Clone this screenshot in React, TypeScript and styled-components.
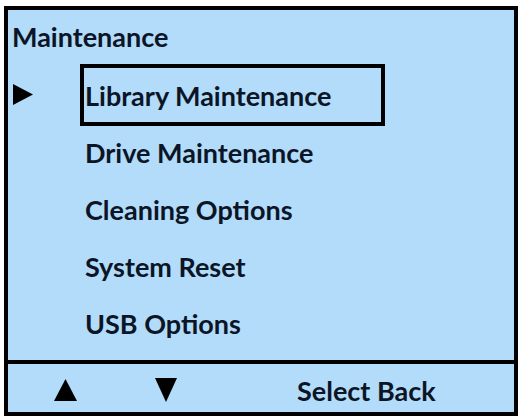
import styled, { createGlobalStyle } from 'styled-components';

const Global = createGlobalStyle`
  html, body {
    margin: 0;
    padding: 0;
    background: #ffffff;
  }
  body {
    font-family: Lato, "Open Sans", "Liberation Sans", sans-serif;
    color: #0b1526;
  }
`

const Frame = styled.div`
  box-sizing: border-box;
  margin: 6px 2px 0 4px;
  width: 514px;
  height: 410px;
  border: 4px solid #000;
  background: #b3dcfb;
  display: flex;
  flex-direction: column;
`

const Title = styled.div`
  font-size: 27px;
  font-weight: 700;
  padding: 13px 0 0 4px;
  height: 43px;
  line-height: 28px;
`

const Menu = styled.ul`
  list-style: none;
  margin: 0;
  padding: 0;
  flex: 1;
  display: flex;
  flex-direction: column;
`

const Row = styled.li`
  display: flex;
  align-items: center;
  height: 57px;
`

const Pointer = styled.span<{ $show: boolean }>`
  width: 72px;
  padding-left: 5px;
  box-sizing: border-box;
  visibility: ${p => (p.$show ? 'visible' : 'hidden')};
  svg {
    display: block;
  }
`

const Item = styled.span<{ $active: boolean }>`
  box-sizing: border-box;
  width: 305px;
  height: 62px;
  display: flex;
  align-items: center;
  padding: 2px 0 0 1px;
  border: 4px solid ${p => (p.$active ? '#000' : 'transparent')};
  font-size: 27px;
  font-weight: 700;
`

const Footer = styled.div`
  border-top: 4px solid #000;
  height: 48px;
  display: flex;
  align-items: center;
  font-size: 27px;
  font-weight: 700;
`

const Key = styled.span<{ $w: number }>`
  width: ${p => p.$w}px;
  display: flex;
  justify-content: center;
  padding-top: 3px;
  svg {
    display: block;
  }
`

const Label = styled.span`
  margin-left: 88px;
  padding-top: 4px;
`

const items = ['Library Maintenance', 'Drive Maintenance', 'Cleaning Options', 'System Reset', 'USB Options']

export default function App() {
  const selected = 0
  return (
    <>
      <Global />
      <Frame>
        <Title>Maintenance</Title>
        <Menu>
          {items.map((name, i) => (
            <Row key={name}>
              <Pointer $show={i === selected}>
                <svg width="20" height="21" viewBox="0 0 20 21">
                  <polygon points="0,0 20,10.5 0,21" fill="#000" />
                </svg>
              </Pointer>
              <Item $active={i === selected}>{name}</Item>
            </Row>
          ))}
        </Menu>
        <Footer>
          <Key $w={115}>
            <svg width="23" height="22" viewBox="0 0 23 22">
              <polygon points="11.5,0 23,22 0,22" fill="#000" />
            </svg>
          </Key>
          <Key $w={86}>
            <svg width="22" height="24" viewBox="0 0 22 24">
              <polygon points="0,0 22,0 11,24" fill="#000" />
            </svg>
          </Key>
          <Label>Select Back</Label>
        </Footer>
      </Frame>
    </>
  )
}
